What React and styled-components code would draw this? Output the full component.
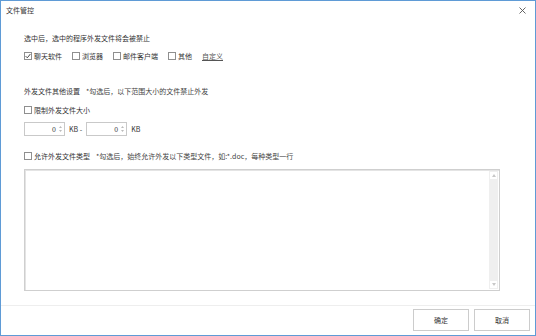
import React from "react";
import styled, { createGlobalStyle } from "styled-components";

const GlobalStyle = createGlobalStyle`
    html, body {
        margin: 0;
        padding: 0;
        background: #fff;
    }
    * {
        box-sizing: border-box;
    }
`;

const Window = styled.div`
    width: 536px;
    height: 336px;
    border: 1px solid #5f9bd6;
    background: #fff;
    display: flex;
    flex-direction: column;
    font-family: "Noto Sans CJK SC", "Microsoft YaHei", sans-serif;
    font-size: 7px;
    line-height: 10px;
    color: #333;
`;

const TitleBar = styled.div`
    height: 18px;
    display: flex;
    align-items: center;
    justify-content: space-between;
    padding: 0 8px 0 5px;
`;

const CloseButton = styled.div`
    width: 10px;
    height: 10px;
    display: flex;
    align-items: center;
    justify-content: center;
`;

const Body = styled.div`
    flex: 1;
    display: flex;
    flex-direction: column;
    padding: 14px 35px 0 23px;
`;

const Line = styled.div`
    display: flex;
    align-items: center;
    height: 10px;
    margin-top: ${(p) => p.$top || 0}px;
    gap: ${(p) => p.$gap || 0}px;
`;

const Hint = styled.span`
    color: #444;
`;

const CheckItem = styled.label`
    display: flex;
    align-items: center;
    gap: 2px;
`;

const Box = styled.span`
    width: 8px;
    height: 8px;
    border: 1px solid #8f8f8f;
    background: #fff;
    display: flex;
    align-items: center;
    justify-content: center;
`;

const LinkText = styled.span`
    color: #555;
    text-decoration: underline;
`;

const SpinRow = styled.div`
    display: flex;
    align-items: center;
    gap: 4px;
    margin-top: 7px;
    height: 14px;
`;

const SpinBox = styled.div`
    width: 41px;
    height: 14px;
    border: 1px solid #c9c9c9;
    display: flex;
    align-items: center;
    justify-content: flex-end;
    padding-right: 2px;
    gap: 3px;
`;

const SpinArrows = styled.div`
    display: flex;
    flex-direction: column;
    gap: 2px;
`;

const TextBox = styled.div`
    margin-top: 8px;
    height: 122px;
    border: 1px solid #cfcfcf;
    box-shadow: inset 1px 1px 0 #e4e4e4;
    display: flex;
    justify-content: flex-end;
    padding: 1px;
`;

const ScrollBar = styled.div`
    width: 9px;
    background: #efefef;
    display: flex;
    flex-direction: column;
    justify-content: space-between;
`;

const ScrollButton = styled.div`
    height: 9px;
    background: #fff;
    border: 1px solid #efefef;
    display: flex;
    align-items: center;
    justify-content: center;
`;

const Footer = styled.div`
    height: 30px;
    border-top: 1px solid #eeeeee;
    display: flex;
    justify-content: flex-end;
    align-items: flex-start;
    gap: 5px;
    padding: 3px 5px 0 0;
`;

const Button = styled.button`
    width: 56px;
    height: 22px;
    border: 1px solid #cccccc;
    background: #fff;
    font-family: inherit;
    font-size: 7px;
    color: #333;
    padding: 0;
`;

const Check = ({ checked, children }) => (
    <CheckItem>
        <Box>
            {checked && (
                <svg width="6" height="6" viewBox="0 0 6 6">
                    <path d="M0.6 3.1 L2.3 4.8 L5.4 1" fill="none" stroke="#333" strokeWidth="0.9" />
                </svg>
            )}
        </Box>
        {children}
    </CheckItem>
);

const Spin = ({ value }) => (
    <SpinBox>
        <span>{value}</span>
        <SpinArrows>
            <svg width="3" height="2" viewBox="0 0 3 2"><path d="M0 2 L1.5 0 L3 2Z" fill="#bbb" /></svg>
            <svg width="3" height="2" viewBox="0 0 3 2"><path d="M0 0 L1.5 2 L3 0Z" fill="#bbb" /></svg>
        </SpinArrows>
    </SpinBox>
);

const App = () => {
    return (
        <>
            <GlobalStyle />
            <Window>
                <TitleBar>
                    <span>文件管控</span>
                    <CloseButton>
                        <svg width="7" height="7" viewBox="0 0 7 7">
                            <path d="M0.5 0.5 L6.5 6.5 M6.5 0.5 L0.5 6.5" stroke="#555" strokeWidth="0.9" />
                        </svg>
                    </CloseButton>
                </TitleBar>
                <Body>
                    <Line>选中后，选中的程序外发文件将会被禁止</Line>
                    <Line $top={8} $gap={10}>
                        <Check checked>聊天软件</Check>
                        <Check>浏览器</Check>
                        <Check>邮件客户端</Check>
                        <Check>其他</Check>
                        <LinkText>自定义</LinkText>
                    </Line>

                    <Line $top={25} $gap={6}>
                        <span>外发文件其他设置</span>
                        <Hint>*勾选后，以下范围大小的文件禁止外发</Hint>
                    </Line>
                    <Line $top={9}>
                        <Check>限制外发文件大小</Check>
                    </Line>
                    <SpinRow>
                        <Spin value="0" />
                        <span>KB -</span>
                        <Spin value="0" />
                        <span>KB</span>
                    </SpinRow>

                    <Line $top={15} $gap={6}>
                        <Check>允许外发文件类型</Check>
                        <Hint>*勾选后，始终允许外发以下类型文件，如:*.doc，每种类型一行</Hint>
                    </Line>
                    <TextBox>
                        <ScrollBar>
                            <ScrollButton>
                                <svg width="4" height="3" viewBox="0 0 4 3"><path d="M0 3 L2 0 L4 3Z" fill="#c8c8c8" /></svg>
                            </ScrollButton>
                            <ScrollButton>
                                <svg width="4" height="3" viewBox="0 0 4 3"><path d="M0 0 L2 3 L4 0Z" fill="#c8c8c8" /></svg>
                            </ScrollButton>
                        </ScrollBar>
                    </TextBox>
                </Body>
                <Footer>
                    <Button>确定</Button>
                    <Button>取消</Button>
                </Footer>
            </Window>
        </>
    );
};

export default App;
